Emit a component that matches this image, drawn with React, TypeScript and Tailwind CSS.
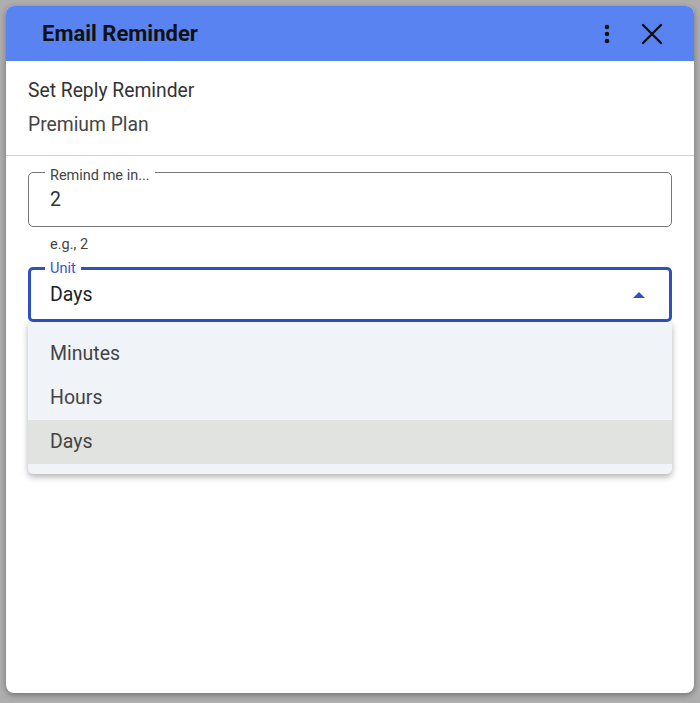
const UNITS = ["Minutes", "Hours", "Days"];

export default function App() {
  return (
    <div
      className="w-[700px] h-[703px] bg-[#aeaeae] p-[6px] pb-[10px]"
      style={{ fontFamily: "Roboto, 'Liberation Sans', sans-serif" }}
    >
      <div className="h-full w-full bg-white rounded-lg overflow-hidden flex flex-col shadow-[0_2px_6px_rgba(0,0,0,0.35)]">
        {/* Header */}
        <div className="h-[55px] bg-[#5a83f2] flex items-center pl-9 pr-[30px] shrink-0">
          <h1 className="text-[22px] font-bold text-[#111] flex-1">Email Reminder</h1>
          <svg width="24" height="24" viewBox="0 0 24 24" className="mr-[21px]">
            <circle cx="12" cy="5" r="2.3" fill="#111" />
            <circle cx="12" cy="12" r="2.3" fill="#111" />
            <circle cx="12" cy="19" r="2.3" fill="#111" />
          </svg>
          <svg width="24" height="24" viewBox="0 0 24 24">
            <path d="M3 3 L21 21 M21 3 L3 21" stroke="#111" strokeWidth="2.4" strokeLinecap="round" />
          </svg>
        </div>

        {/* Subtitle */}
        <div className="px-[22px] pt-[13px] pb-[13px] border-b border-[#cfcfcf] text-[19.3px] text-[#333]">
          <p className="leading-[34px]">Set Reply Reminder</p>
          <p className="leading-[34px] text-[#444]">Premium Plan</p>
        </div>

        {/* Form */}
        <div className="px-[22px] pt-[16px]">
          <div className="relative h-[55px] border border-[#777] rounded-[5px] flex items-center px-[21px] pt-[1px]">
            <span className="absolute -top-[6px] left-[16px] bg-white px-[5px] text-[14.5px] leading-[17px] text-[#444]">
              Remind me in...
            </span>
            <span className="text-[19.5px] text-[#333]">2</span>
          </div>
          <p className="text-[14.5px] text-[#444] pl-[22px] pt-[8px] leading-[20px]">e.g., 2</p>

          <div className="relative mt-[12px]">
            <div className="relative h-[55px] border-[3px] border-[#2f4fc4] rounded-[5px] flex items-center pl-[19px] pr-[24px]">
              <span className="absolute -top-[10px] left-[14px] bg-white px-[5px] text-[14.5px] leading-[17px] text-[#3a55c4]">
                Unit
              </span>
              <span className="text-[19.5px] text-[#222] flex-1">Days</span>
              <svg width="12" height="6" viewBox="0 0 12 6">
                <path d="M0 6 L6 0 L12 6 Z" fill="#2f4fc4" />
              </svg>
            </div>

            <ul className="absolute left-0 right-0 top-[55px] bg-[#f0f3f8] rounded-b-[5px] py-[10px] shadow-[0_3px_6px_rgba(0,0,0,0.3)] z-10">
              {UNITS.map((u) => (
                <li
                  key={u}
                  className={
                    "h-[44px] flex items-center px-[22px] text-[19.5px] text-[#444] " +
                    (u === "Days" ? "bg-[#e1e3e1]" : "")
                  }
                >
                  {u}
                </li>
              ))}
            </ul>
          </div>
        </div>
      </div>
    </div>
  );
}
